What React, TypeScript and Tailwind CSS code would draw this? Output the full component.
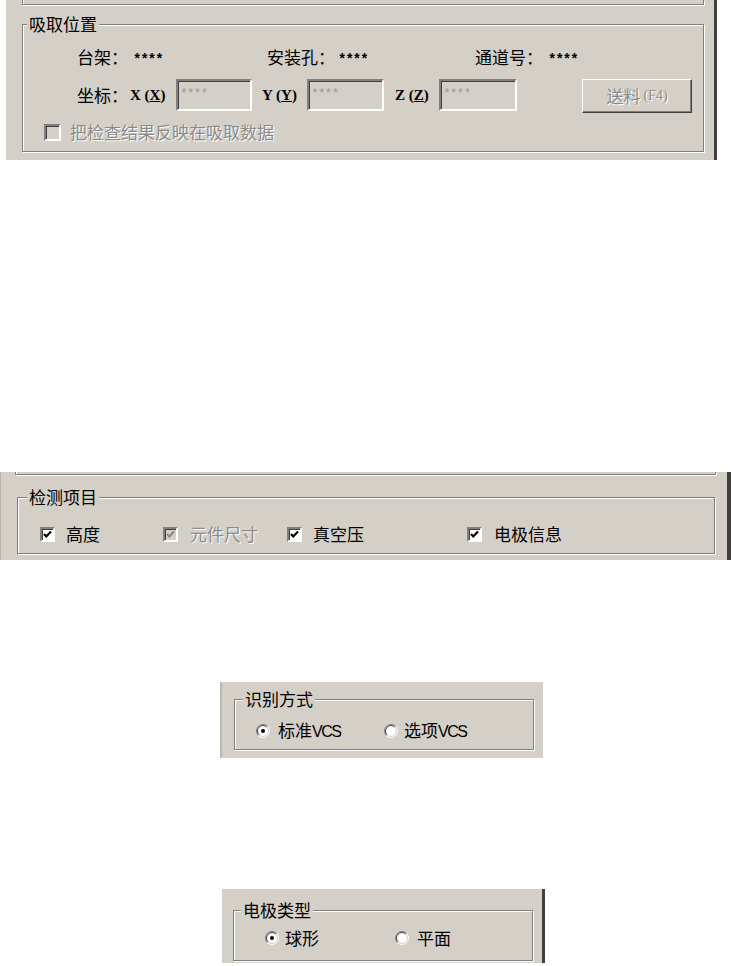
import React from "react";

const etched = "border border-[#808080] shadow-[inset_1px_1px_0_#fff,1px_1px_0_#fff]";

function GroupBox({
  title,
  className,
  titleLeft = "left-[7px]",
  children,
}: {
  title: string;
  className: string;
  titleLeft?: string;
  children?: React.ReactNode;
}) {
  return (
    <div className={`relative ${etched} ${className}`}>
      <span
        className={`absolute -top-[11px] ${titleLeft} bg-[#d4d0c8] px-[2px] text-[17px] leading-[20px] text-black`}
      >
        {title}
      </span>
      {children}
    </div>
  );
}

function Stars() {
  return (
    <span className="font-['Liberation_Mono',monospace] font-bold text-[14px] leading-[20px] tracking-[-1px] translate-y-[3px] inline-block text-black">
      ****
    </span>
  );
}

function Mnemonic({ ch }: { ch: string }) {
  return (
    <span className="font-['Liberation_Serif',serif] font-bold text-[15px] leading-[32px] text-black">
      {ch} (<span className="underline">{ch}</span>)
    </span>
  );
}

function Input() {
  return (
    <div className="h-full w-full border-2 border-t-[#808080] border-l-[#808080] border-b-white border-r-white shadow-[inset_1px_1px_0_#404040] bg-[#d4d0c8] pl-[2px] flex items-start">
      <span className="font-['Liberation_Mono',monospace] text-[13px] leading-[16px] tracking-[-1px] text-[#9a9a9a] mt-[5px]">
        ****
      </span>
    </div>
  );
}

function CheckBox({
  checked,
  disabled,
  size = "w-[15px] h-[15px]",
}: {
  checked: boolean;
  disabled?: boolean;
  size?: string;
}) {
  return (
    <span
      className={`inline-flex items-center justify-center shrink-0 ${size} border-2 border-t-[#808080] border-l-[#808080] border-b-white border-r-white shadow-[inset_1px_1px_0_#404040] ${
        disabled ? "bg-[#d4d0c8]" : "bg-white"
      }`}
    >
      {checked && (
        <svg width="11" height="11" viewBox="0 0 11 11">
          <path
            d="M2 5 L4.3 7.5 L9 2.5"
            fill="none"
            stroke={disabled ? "#8a8a8a" : "#000"}
            strokeWidth="2.2"
          />
        </svg>
      )}
    </span>
  );
}

function Radio({ checked }: { checked: boolean }) {
  return (
    <svg width="14" height="14" viewBox="0 0 14 14" className="shrink-0">
      <circle cx="7" cy="7" r="6" fill="#fff" />
      <path d="M2.4 11.6 A6.5 6.5 0 0 1 11.6 2.4" fill="none" stroke="#808080" strokeWidth="1" />
      <path d="M11.6 2.4 A6.5 6.5 0 0 1 2.4 11.6" fill="none" stroke="#ffffff" strokeWidth="1" />
      <path d="M3.1 10.9 A5.5 5.5 0 0 1 10.9 3.1" fill="none" stroke="#404040" strokeWidth="1" />
      <path d="M10.9 3.1 A5.5 5.5 0 0 1 3.1 10.9" fill="none" stroke="#d4d0c8" strokeWidth="1" />
      {checked && <circle cx="7" cy="7" r="2" fill="#000" />}
    </svg>
  );
}

function Vcs() {
  return (
    <span className="font-['Liberation_Sans_Narrow','Liberation_Sans',sans-serif] text-[16px] tracking-[-1.5px]">VCS</span>
  );
}

export default function App() {
  return (
    <div className="w-[731px] h-[966px] bg-white overflow-hidden font-['Noto_Sans_CJK_SC','Noto_Sans',sans-serif] text-black">
      {/* Panel 1 */}
      <div className="ml-[6px] w-[711px] h-[160px] bg-[#d4d0c8] border-r-[3px] border-r-[#404040]">
        <div className="ml-[16px] w-[682px] h-[5px] border-x border-b border-[#808080] shadow-[inset_1px_0_0_#fff,1px_1px_0_#fff]" />
        <GroupBox title="吸取位置" className="mt-[19px] ml-[16px] w-[682px] h-[128px]" titleLeft="left-[4px]">
          <div className="flex pl-[54px] pt-[22px] text-[17px] leading-[20px]">
            <div className="flex w-[190px]">
              <span className="w-[56px]">台架：</span>
              <Stars />
            </div>
            <div className="flex w-[208px]">
              <span className="w-[71px]">安装孔：</span>
              <Stars />
            </div>
            <div className="flex">
              <span className="w-[73px]">通道号：</span>
              <Stars />
            </div>
          </div>
          <div className="flex items-start pl-[54px] mt-[12px] h-[34px]">
            <span className="w-[53px] text-[17px] leading-[32px]">坐标：</span>
            <span className="w-[46px]">
              <Mnemonic ch="X" />
            </span>
            <div className="w-[76px] h-[32px]">
              <Input />
            </div>
            <span className="ml-[10px] w-[45px]">
              <Mnemonic ch="Y" />
            </span>
            <div className="w-[77px] h-[32px]">
              <Input />
            </div>
            <span className="ml-[11px] w-[44px]">
              <Mnemonic ch="Z" />
            </span>
            <div className="w-[78px] h-[32px]">
              <Input />
            </div>
            <div className="ml-[65px] w-[110px] h-[34px] border border-t-white border-l-white border-b-[#404040] border-r-[#404040] shadow-[inset_-1px_-1px_0_#808080] flex items-center justify-center text-[#8a8a8a] [text-shadow:1px_1px_0_#fff]">
              <span className="text-[17px] leading-[20px]">送料</span>
              <span className="font-['Liberation_Serif',serif] text-[14px] leading-[20px] ml-[3px]">(F4)</span>
            </div>
          </div>
          <div className="flex items-center pl-[21px] mt-[9px] h-[20px]">
            <CheckBox checked={false} disabled size="w-[17px] h-[17px]" />
            <span className="ml-[9px] text-[17px] leading-[20px] text-[#8a8a8a] [text-shadow:1px_1px_0_#fff]">
              把检查结果反映在吸取数据
            </span>
          </div>
        </GroupBox>
      </div>

      {/* Panel 2 */}
      <div className="mt-[312px] w-[731px] h-[88px] bg-[#d4d0c8] border-r-[4px] border-r-[#404040] border-l border-l-[#b8b5ae]">
        <div className="ml-[14px] w-[701px] h-[3px] border-x border-b border-[#808080] shadow-[inset_1px_0_0_#fff,1px_1px_0_#fff]" />
        <GroupBox title="检测项目" className="mt-[22px] ml-[16px] w-[698px] h-[57px]" titleLeft="left-[9px]">
          <div className="flex items-center pl-[22px] pt-[26px] text-[17px] leading-[20px]">
            <div className="flex items-center w-[123px]">
              <CheckBox checked />
              <span className="ml-[11px]">高度</span>
            </div>
            <div className="flex items-center w-[124px]">
              <CheckBox checked disabled />
              <span className="ml-[12px] text-[#8a8a8a] [text-shadow:1px_1px_0_#fff]">元件尺寸</span>
            </div>
            <div className="flex items-center w-[180px]">
              <CheckBox checked />
              <span className="ml-[11px]">真空压</span>
            </div>
            <div className="flex items-center">
              <CheckBox checked />
              <span className="ml-[12px]">电极信息</span>
            </div>
          </div>
        </GroupBox>
      </div>

      {/* Panel 3 */}
      <div className="mt-[122px] ml-[220px] w-[323px] h-[76px] bg-[#d4d0c8] border-l-[2px] border-l-[#bdbab3]">
        <div className="pt-[17px]">
          <GroupBox title="识别方式" className="ml-[12px] w-[300px] h-[51px]" titleLeft="left-[8px]">
            <div className="flex items-center pl-[21px] pt-[20px] text-[17px] leading-[20px]">
              <div className="flex items-center w-[128px]">
                <Radio checked />
                <span className="ml-[8px]">
                  标准<Vcs />
                </span>
              </div>
              <div className="flex items-center">
                <Radio checked={false} />
                <span className="ml-[6px]">
                  选项<Vcs />
                </span>
              </div>
            </div>
          </GroupBox>
        </div>
      </div>

      {/* Panel 4 */}
      <div className="mt-[131px] ml-[222px] w-[323px] h-[74px] bg-[#d4d0c8] border-r-[3px] border-r-[#404040]">
        <div className="pt-[21px]">
          <GroupBox title="电极类型" className="ml-[11px] w-[300px] h-[51px]" titleLeft="left-[7px]">
            <div className="flex items-center pl-[31px] pt-[17px] text-[17px] leading-[20px]">
              <div className="flex items-center w-[130px]">
                <Radio checked />
                <span className="ml-[6px]">球形</span>
              </div>
              <div className="flex items-center">
                <Radio checked={false} />
                <span className="ml-[8px]">平面</span>
              </div>
            </div>
          </GroupBox>
        </div>
      </div>
    </div>
  );
}
